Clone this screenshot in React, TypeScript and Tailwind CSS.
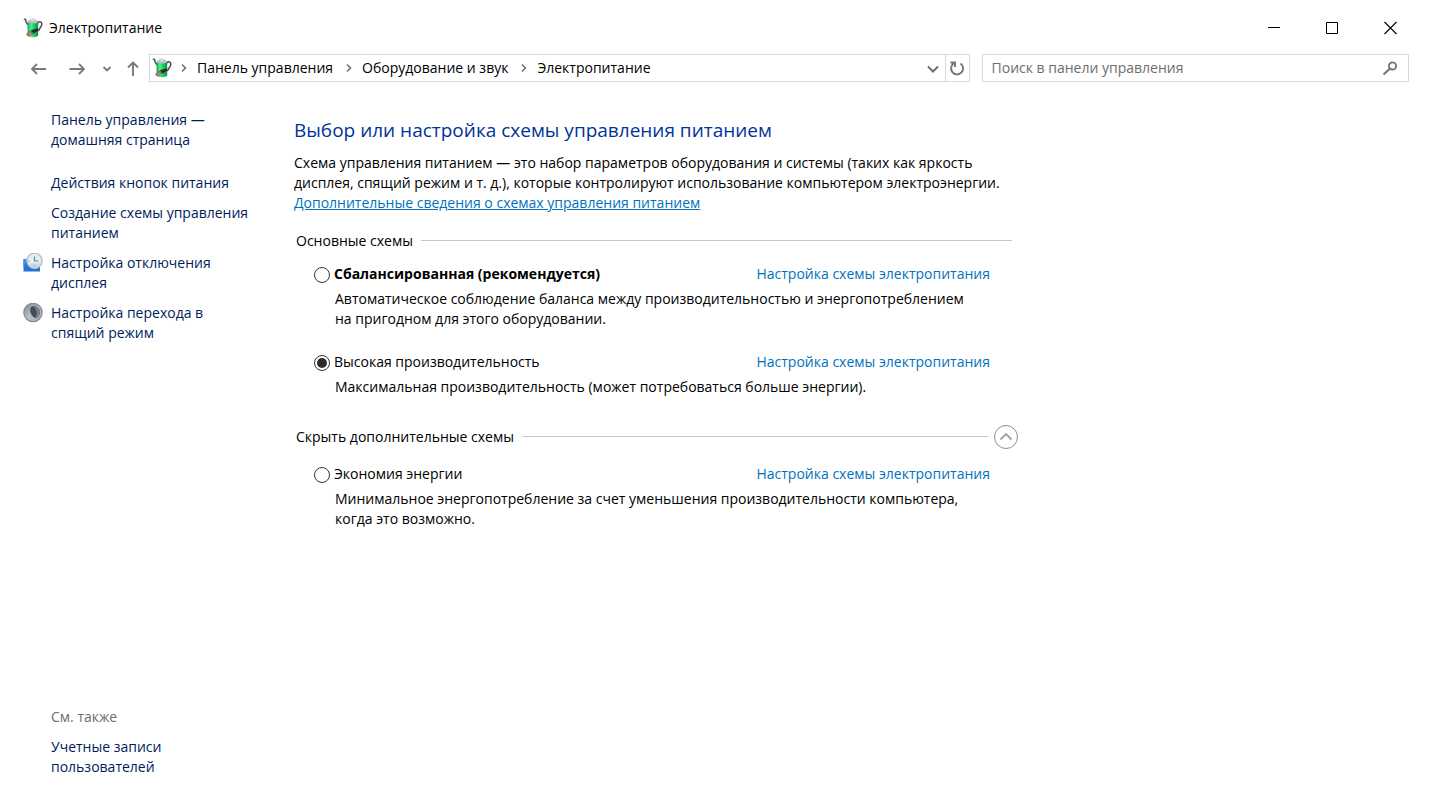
import { useState } from "react";
import type { ReactNode } from "react";

function PowerIcon({ className }: { className: string }) {
  return (
    <svg viewBox="0 0 20 20" className={className} aria-hidden="true">
      <defs>
        <linearGradient id="battery" x1="0" x2="1" y1="0" y2="0">
          <stop offset="0" stopColor="#0fa04a" />
          <stop offset="0.3" stopColor="#4df08f" />
          <stop offset="0.6" stopColor="#1ad062" />
          <stop offset="1" stopColor="#07903a" />
        </linearGradient>
      </defs>
      <path d="M.8 1.2 2.6 1.4 3.2 4.4 5.4 7.2" fill="none" stroke="#5b5169" strokeWidth="1.5" />
      <path d="M14.6 4.8C17.500 2.400 19.600 4.800 18.400 7.800L15.200 13" fill="none" stroke="#4d4659" strokeWidth="1.500" />
      <path d="M4.600 4V17.600C6.500 19.800 13.500 19.800 15.200 17.600V4Z" fill="url(#battery)" />
      <ellipse cx="9.900" cy="3.600" rx="5.300" ry="1.800" fill="#b9bfcb" />
      <ellipse cx="9.900" cy="2.200" rx="2.600" ry="1.500" fill="#dedbe9" stroke="#a7a2b8" strokeWidth=".4" />
      <path d="M7.800 12.200 14.600 10.200 15.200 12.800 10.400 15.800Z" fill="#2c2b31" />
      <path d="M3.400 15.400 8 12.400 10.800 15.400 6.200 18.400 3.800 17.600Z" fill="#7c6758" />
      <path d="m4.600 15.600 3 1.800M6.400 14.400 9 16.400" stroke="#d9c6a6" strokeWidth=".8" />
    </svg>
  );
}

function ClockIcon() {
  return (
    <svg viewBox="0 0 20 20" className="size-5" aria-hidden="true">
      <path d="M.5 6 17 8V18.500H.5Z" fill="#2b6fd8" />
      <path d="M.5 6 4 8 .5 15Z" fill="#4b89e2" />
      <circle cx="11.500" cy="7.800" r="7.600" fill="#e4eef3" stroke="#aebfc9" strokeWidth="1.300" />
      <path d="M5.500 10.500A6.600 6.600 0 0 0 17.500 10.500Z" fill="#c6dae5" />
      <path d="M11.500 3.500V8H15.500" fill="none" stroke="#6d8391" strokeWidth="1.200" />
      <path d="M11.500 12.500V14M5.500 8H7" stroke="#8a9ca7" strokeWidth="1" />
    </svg>
  );
}

function MoonIcon() {
  return (
    <svg viewBox="0 0 20 20" className="size-5" aria-hidden="true">
      <defs>
        <linearGradient id="moon" x1="0" x2="1" y1="0" y2="1">
          <stop offset="0" stopColor="#7d828e" />
          <stop offset="0.5" stopColor="#b9bfca" />
          <stop offset="1" stopColor="#a2a8b4" />
        </linearGradient>
      </defs>
      <circle cx="10" cy="9.500" r="9.200" fill="url(#moon)" stroke="#858b97" strokeWidth="1.200" />
      <path d="M8 4C12 1.500 17 4.500 16.800 9.500 16.500 13.500 14 15.800 12 15 8 13 6 8 8 4Z" fill="#474a52" />
      <path d="M9.500 3.500C14 5 15 11 12 15 15 15.500 17 12.500 16.800 9 16.500 5 13 2.500 9.500 3.500Z" fill="#7b808a" />
    </svg>
  );
}

function Stroke({ d, className, width = 2 }: { d: string; className: string; width?: number }) {
  return (
    <svg viewBox="0 0 16 16" className={className} fill="none" stroke="currentColor" strokeWidth={width} aria-hidden="true">
      <path d={d} />
    </svg>
  );
}

function Crumb({ children }: { children: ReactNode }) {
  return (
    <li className="flex items-center">
      <Stroke d="M6 4.500 9.500 8 6 11.500" className="mr-px size-4 text-[#6e6e6e]" width={1.5} />
      <a href="#" className="px-1">{children}</a>
    </li>
  );
}

function SideLink({ icon, children }: { icon?: ReactNode; children: ReactNode }) {
  return (
    <li className="flex gap-2">
      <span className="h-5 w-5 shrink-0">{icon}</span>
      <a href="#" className="text-[#001c5c]">{children}</a>
    </li>
  );
}

type PlanProps = {
  id: string;
  name: string;
  bold?: boolean;
  selected: string;
  onSelect: (id: string) => void;
  children: ReactNode;
};

function Plan({ id, name, bold, selected, onSelect, children }: PlanProps) {
  return (
    <div className="pr-7 pl-5">
      <div className="flex items-center justify-between">
        <label htmlFor={id} className="flex items-center gap-1">
          <input
            id={id}
            type="radio"
            name="plan"
            checked={selected === id}
            onChange={() => onSelect(id)}
            className="mt-0.5 size-4 appearance-none rounded-full border border-[#333] bg-white bg-clip-content p-0.5 checked:bg-[#2b2b2b]"
          />
          <span className={bold ? "font-bold" : ""}>{name}</span>
        </label>
        <a href="#" className="text-[#0072bc]">Настройка схемы электропитания</a>
      </div>
      <p className="mt-[5px] pl-[21px] whitespace-nowrap">{children}</p>
    </div>
  );
}

export default function App() {
  const [plan, setPlan] = useState("high");
  const [open, setOpen] = useState(true);
  const [query, setQuery] = useState("");

  return (
    <div className="flex min-h-screen flex-col bg-white font-['Open_Sans','Noto_Sans',sans-serif] text-[14px] leading-5 text-black">
      <header className="flex h-[54px] items-center justify-between pt-[2px] pr-[26px] pl-[23px]">
        <div className="flex items-center gap-1.5">
          <PowerIcon className="size-5" />
          <h1>Электропитание</h1>
        </div>
        <div className="flex items-center gap-[22px]">
          <button type="button" aria-label="Свернуть" className="grid h-9 w-9 place-items-center">
            <Stroke d="M2 7.500H14" className="size-4" width={1} />
          </button>
          <button type="button" aria-label="Развернуть" className="grid h-9 w-9 place-items-center">
            <Stroke d="M2.500 2.500H13.500V13.500H2.500Z" className="size-4" width={1} />
          </button>
          <button type="button" aria-label="Закрыть" className="grid h-9 w-9 place-items-center">
            <Stroke d="M2.500 2 14.500 14M14.500 2 2.500 14" className="size-4" width={1.1} />
          </button>
        </div>
      </header>

      <div className="flex h-7 items-center pr-[25px] pl-[30px]">
        <nav className="mr-2 flex shrink-0 items-center text-[#7a7a7a]" aria-label="Переходы">
          <button type="button" aria-label="Назад" className="mr-[23px]">
            <Stroke d="M16 9H2M7 4 2 9 7 14" className="size-4" width={1.8} />
          </button>
          <button type="button" aria-label="Вперед" className="mr-[14px]">
            <Stroke d="M.500 9H15M10 4 15 9 10 14" className="size-4" width={1.8} />
          </button>
          <button type="button" aria-label="Последние расположения" className="mr-[10px]">
            <Stroke d="M4.500 7 8 10.500 11.500 7" className="size-4" width={1.9} />
          </button>
          <button type="button" aria-label="Вверх">
            <Stroke d="M8 16V2.500M3 7.500 8 2.500 13 7.500" className="size-4" width={1.9} />
          </button>
        </nav>
        <div className="flex h-7 min-w-0 flex-1 items-center border border-[#d9d9d9]">
          <PowerIcon className="mr-1 ml-0.5 size-5" />
          <ol className="flex flex-1 items-center gap-1">
            <Crumb>Панель управления</Crumb>
            <Crumb>Оборудование и звук</Crumb>
            <Crumb>Электропитание</Crumb>
          </ol>
          <button type="button" aria-label="Предыдущие расположения" className="grid h-full w-6 place-items-center text-[#6e6e6e]">
            <Stroke d="M3 6.500 8 11.500 13 6.500" className="size-4" width={2} />
          </button>
          <button type="button" aria-label="Обновить" className="grid h-full w-6 place-items-center border-l border-[#d9d9d9] text-[#757575]">
            <Stroke d="M11.500 3.500A6 6 0 1 1 5.500 3M1.500 2.500H6V7" className="size-4" width={1.9} />
          </button>
        </div>
        <label className="ml-3 flex h-7 w-[31%] shrink-0 items-center border border-[#d9d9d9] pr-2.5 pl-[9px]">
          <input
            type="text"
            value={query}
            onChange={(e) => setQuery(e.target.value)}
            placeholder="Поиск в панели управления"
            aria-label="Поиск в панели управления"
            className="min-w-0 flex-1 outline-none placeholder:text-[#6d6d6d]"
          />
          <svg viewBox="0 0 16 16" className="size-4 text-[#757575]" fill="none" stroke="currentColor" aria-hidden="true">
            <circle cx="10.500" cy="6" r="3.600" strokeWidth="1.900" />
            <path d="M7.800 8.800 1.500 14.500" strokeWidth="2.200" />
          </svg>
        </label>
      </div>

      <div className="flex flex-1 pb-[25px] pl-[23px]">
        <aside className="flex w-[271px] shrink-0 flex-col justify-between pt-7">
          <ul className="flex flex-col gap-2.5">
            <SideLink>Панель управления —<br />домашняя страница</SideLink>
            <li className="h-[3px]" aria-hidden="true" />
            <SideLink>Действия кнопок питания</SideLink>
            <SideLink>Создание схемы управления<br />питанием</SideLink>
            <SideLink icon={<ClockIcon />}>Настройка отключения<br />дисплея</SideLink>
            <SideLink icon={<MoonIcon />}>Настройка перехода в<br />спящий режим</SideLink>
          </ul>
          <div>
            <h2 className="mb-2.5 pl-7 text-[#6d6d6d]">См. также</h2>
            <ul>
              <SideLink>Учетные записи<br />пользователей</SideLink>
            </ul>
          </div>
        </aside>

        <main className="w-full max-w-[724px] pt-9">
          <h2 className="text-[19px] leading-6 whitespace-nowrap text-[#003399]">Выбор или настройка схемы управления питанием</h2>
          <p className="mt-[11px] whitespace-nowrap">
            Схема управления питанием — это набор параметров оборудования и системы (таких как яркость<br />
            дисплея, спящий режим и т. д.), которые контролируют использование компьютером электроэнергии.<br />
            <a href="#" className="text-[#0072bc] underline">Дополнительные сведения о схемах управления питанием</a>
          </p>

          <section className="mt-[18px]">
            <div className="mb-[13px] flex items-center gap-2 pr-1.5 pl-0.5">
              <h3>Основные схемы</h3>
              <hr className="mb-0.5 flex-1 border-[#c8c8c8]" />
            </div>
            <div className="flex flex-col gap-[23px]">
              <Plan id="balanced" name="Сбалансированная (рекомендуется)" bold selected={plan} onSelect={setPlan}>
                Автоматическое соблюдение баланса между производительностью и энергопотреблением<br />на пригодном для этого оборудовании.
              </Plan>
              <Plan id="high" name="Высокая производительность" selected={plan} onSelect={setPlan}>
                Максимальная производительность (может потребоваться больше энергии).
              </Plan>
            </div>
          </section>

          <section className="mt-7">
            <div className="flex items-center pl-0.5">
              <h3>Скрыть дополнительные схемы</h3>
              <hr className="mr-1.5 mb-0.5 ml-2 flex-1 border-[#c8c8c8]" />
              <button
                type="button"
                aria-label="Скрыть дополнительные схемы"
                aria-expanded={open}
                onClick={() => setOpen(!open)}
                className="grid size-6 place-items-center rounded-full border border-[#8c8c8c] text-[#a0a0a0]"
              >
                <Stroke d="M2.500 10.500 8 5 13.500 10.500" className="size-4" width={1.8} />
              </button>
            </div>
            {open && (
              <div className="mt-[15px]">
                <Plan id="saver" name="Экономия энергии" selected={plan} onSelect={setPlan}>
                  Минимальное энергопотребление за счет уменьшения производительности компьютера,<br />когда это возможно.
                </Plan>
              </div>
            )}
          </section>
        </main>
      </div>
    </div>
  );
}
